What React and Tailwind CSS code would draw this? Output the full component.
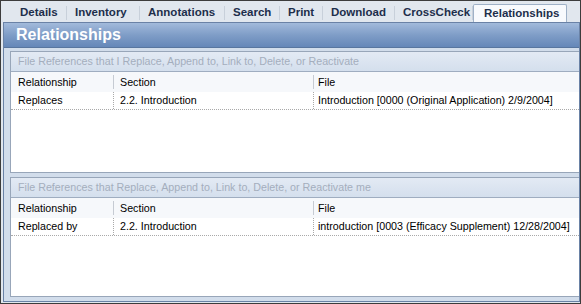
import React from "react";

const tabs = [
  { label: "Details", w: "w-[55px]" },
  { label: "Inventory", w: "w-[73px]" },
  { label: "Annotations", w: "w-[85px]" },
  { label: "Search", w: "w-[55px]" },
  { label: "Print", w: "w-[43px]" },
  { label: "Download", w: "w-[72px]" },
  { label: "CrossCheck", w: "w-[78px]" },
];

const panels = [
  {
    title: "File References that I Replace, Append to, Link to, Delete, or Reactivate",
    rel: "Replaces",
    section: "2.2. Introduction",
    file: "Introduction [0000 (Original Application) 2/9/2004]",
    h: "h-[122px]",
  },
  {
    title: "File References that Replace, Append to, Link to, Delete, or Reactivate me",
    rel: "Replaced by",
    section: "2.2. Introduction",
    file: "introduction [0003 (Efficacy Supplement) 12/28/2004]",
    h: "h-[120px]",
  },
];

const RefPanel = ({ panel }) => (
  <div className={`flex flex-col ${panel.h} border border-r-0 border-[#98a6b9] bg-white`}>
    {/* panel caption */}
    <div className="h-[20px] shrink-0 flex items-center pl-[7px] bg-gradient-to-b from-[#e3eaf4] to-[#d4dfed] border-b border-[#9fadc0] text-[#a4aebd] whitespace-nowrap">
      {panel.title}
    </div>
    {/* column headers */}
    <div className="h-[20px] shrink-0 flex items-center bg-[#f6f8fb] text-black whitespace-nowrap">
      <div className="w-[102px] pl-[7px]">Relationship</div>
      <div className="w-px h-[14px] bg-[#c6cbd3]"></div>
      <div className="w-[199px] pl-[6px]">Section</div>
      <div className="w-px h-[14px] bg-[#c6cbd3]"></div>
      <div className="pl-[4px]">File</div>
    </div>
    {/* row */}
    <div className="h-[18px] shrink-0 flex items-center border-b border-dotted border-[#a9a9a9] text-black whitespace-nowrap">
      <div className="w-[102px] pl-[7px]">{panel.rel}</div>
      <div className="w-[200px] h-full flex items-center border-l border-dotted border-[#a9a9a9] pl-[6px]">
        {panel.section}
      </div>
      <div className="h-full flex items-center border-l border-dotted border-[#a9a9a9] pl-[4px]">
        {panel.file}
      </div>
    </div>
    <div className="flex-1 bg-white"></div>
  </div>
);

export default function App() {
  return (
    <div
      className="w-[581px] h-[304px] border border-[#3c3c3c] bg-[#e1e7ee] flex flex-col overflow-hidden text-[10.7px]"
      style={{ fontFamily: '"Liberation Sans", Arial, sans-serif' }}
    >
      {/* Tab strip */}
      <div className="h-[21px] shrink-0 flex items-end pl-[11px]">
        {tabs.map((t) => (
          <div key={t.label} className={`${t.w} h-[18px] flex items-center justify-between`}>
            <span className="pl-[8px] text-[11.5px] font-bold text-[#1d2e4b] leading-none whitespace-nowrap">
              {t.label}
            </span>
            <span className="w-px h-[14px] shrink-0 bg-[#c8d0da]"></span>
          </div>
        ))}
        <div className="w-[94px] h-[18px] flex items-center pl-[10px] bg-[#f8fafd] border border-b-0 border-[#9fb1c7] rounded-t-[2px]">
          <span className="text-[11.5px] font-bold text-[#1d2e4b] leading-none">Relationships</span>
        </div>
      </div>

      {/* Frame */}
      <div className="flex-1 ml-[2px] mb-[1px] border border-[#6a82a6] flex flex-col bg-[#d2ddeb]">
        <div className="h-[25px] shrink-0 flex items-center pl-[12px] bg-gradient-to-b from-[#a2badb] via-[#7f9dc7] to-[#6587b8] border-b border-[#58769f]">
          <span className="text-white font-bold text-[16px] leading-none">Relationships</span>
        </div>
        <div className="flex-1 flex flex-col gap-[4px] pl-[6px] pt-[3px] pb-[4px]">
          {panels.map((p) => (
            <RefPanel key={p.rel} panel={p} />
          ))}
        </div>
      </div>
    </div>
  );
}
